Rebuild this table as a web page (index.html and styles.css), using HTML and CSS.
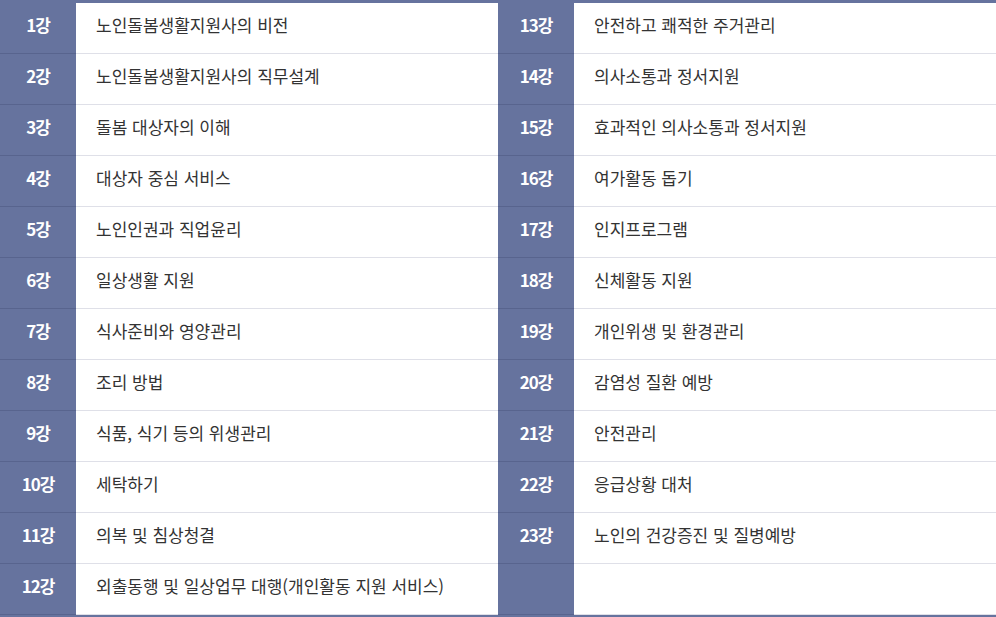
FILE: index.html
```html
<!DOCTYPE html>
<html lang="ko">
<head>
<meta charset="utf-8">
<title>강의 목차</title>
<link rel="stylesheet" href="styles.css">
</head>
<body>
<table class="curriculum">
  <colgroup>
    <col class="col-no"><col class="col-title"><col class="col-no"><col class="col-title">
  </colgroup>
  <tbody>
    <tr><th>1강</th><td>노인돌봄생활지원사의 비전</td><th>13강</th><td>안전하고 쾌적한 주거관리</td></tr>
    <tr><th>2강</th><td>노인돌봄생활지원사의 직무설계</td><th>14강</th><td>의사소통과 정서지원</td></tr>
    <tr><th>3강</th><td>돌봄 대상자의 이해</td><th>15강</th><td>효과적인 의사소통과 정서지원</td></tr>
    <tr><th>4강</th><td>대상자 중심 서비스</td><th>16강</th><td>여가활동 돕기</td></tr>
    <tr><th>5강</th><td>노인인권과 직업윤리</td><th>17강</th><td>인지프로그램</td></tr>
    <tr><th>6강</th><td>일상생활 지원</td><th>18강</th><td>신체활동 지원</td></tr>
    <tr><th>7강</th><td>식사준비와 영양관리</td><th>19강</th><td>개인위생 및 환경관리</td></tr>
    <tr><th>8강</th><td>조리 방법</td><th>20강</th><td>감염성 질환 예방</td></tr>
    <tr><th>9강</th><td>식품, 식기 등의 위생관리</td><th>21강</th><td>안전관리</td></tr>
    <tr><th>10강</th><td>세탁하기</td><th>22강</th><td>응급상황 대처</td></tr>
    <tr><th>11강</th><td>의복 및 침상청결</td><th>23강</th><td>노인의 건강증진 및 질병예방</td></tr>
    <tr><th>12강</th><td>외출동행 및 일상업무 대행(개인활동 지원 서비스)</td><th></th><td></td></tr>
  </tbody>
</table>
</body>
</html>
```

FILE: styles.css
```css
html, body {
  margin: 0;
  padding: 0;
  background: #ffffff;
}

body {
  font-family: "Noto Sans CJK KR", "Noto Sans", sans-serif;
}

.curriculum {
  width: 996px;
  border-collapse: separate;
  border-spacing: 0;
  table-layout: fixed;
  border-top: 3px solid #66739e;
  border-bottom: 3px solid #66739e;
}

.col-no {
  width: 76px;
}

.col-title {
  width: 422px;
}

.curriculum th,
.curriculum td {
  height: 43px;
  padding: 0 0 7px;
  border-bottom: 1px solid #dfe0e8;
  vertical-align: middle;
  line-height: 1;
}

.curriculum th {
  background: #66739e;
  color: #ffffff;
  font-size: 17px;
  font-weight: 700;
  text-align: center;
  border-bottom-color: #58648e;
  letter-spacing: -1px;
}

.curriculum td {
  color: #333333;
  font-size: 17px;
  font-weight: 400;
  text-align: left;
  padding-left: 20px;
}
```
